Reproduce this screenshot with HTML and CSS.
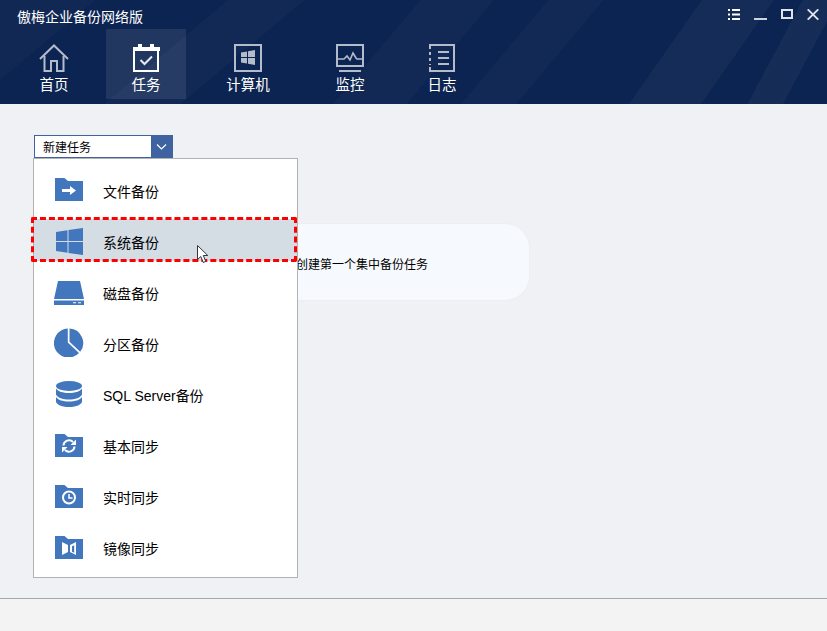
FILE: index.html
```html
<!DOCTYPE html>
<html lang="zh-CN">
<head>
<meta charset="utf-8">
<title>傲梅企业备份网络版</title>
<link rel="stylesheet" href="styles.css">
</head>
<body>
<div class="app">
  <header class="header">
    <div class="titlebar">
      <span class="app-title">傲梅企业备份网络版</span>
      <div class="win-controls">
        <svg class="win-icon" width="12" height="11" viewBox="0 0 12 11"><path fill="#fff" d="M0 0h2v2H0zM4 0h8v2H4zM0 4.500h2v2H0zM4 4.500h8v2H4zM0 9h2v2H0zM4 9h8v2H4z"/></svg>
        <svg class="win-icon" width="13" height="11" viewBox="0 0 13 11"><path fill="#ccd2de" d="M0 9h13v2H0z"/></svg>
        <svg class="win-icon" width="12" height="11" viewBox="0 0 12 11"><path fill="none" stroke="#dfe3ea" stroke-width="2" d="M1 1h10v8H1z"/></svg>
        <svg class="win-icon" width="12" height="11" viewBox="0 0 12 11"><path fill="none" stroke="#dfe3ea" stroke-width="1.800" d="M.7.300l10.600 10.400M11.300.300L.7 10.700"/></svg>
      </div>
    </div>
    <nav class="nav">
      <a class="nav-item">
        <svg width="30" height="28" viewBox="0 0 30 28" fill="none" stroke="#b4bccb" stroke-width="2"><path d="M1 15L15 1.500 29 15"/><path d="M5.500 12v15h6.500V17h6v10h6.500V12"/></svg>
        <span>首页</span>
      </a>
      <a class="nav-item nav-item-active">
        <svg width="28" height="28" viewBox="0 0 28 28"><path fill="none" stroke="#fff" stroke-width="2" d="M2 4h24v23H2z"/><path fill="#fff" d="M1 3h27v4H1zM6 0h4v3H6zM18 0h4v3h-4z"/><path fill="none" stroke="#e8ebf1" stroke-width="2" d="M8.500 16l4 4 7.500-7.500"/></svg>
        <span>任务</span>
      </a>
      <a class="nav-item nav-item-wide">
        <svg width="28" height="28" viewBox="0 0 28 28"><path fill="none" stroke="#b4bccb" stroke-width="2" d="M1 1h26v26H1z"/><path fill="#b4bccb" d="M7 8.500l6-1V13H7zM14 7.300l7-1.300V13h-7zM7 14h6v5.500l-6-1zM14 14h7v7l-7-1.300z"/></svg>
        <span>计算机</span>
      </a>
      <a class="nav-item">
        <svg width="28" height="28" viewBox="0 0 28 28" fill="none" stroke="#b4bccb" stroke-width="2"><path d="M1 1h26v21H1z"/><path d="M1 15h7l3-3 3 4 3-7 3 5 1 1h6" stroke-width="1.600"/><path d="M3 27h22"/></svg>
        <span>监控</span>
      </a>
      <a class="nav-item">
        <svg width="26" height="28" viewBox="0 0 26 28" fill="none" stroke="#b4bccb" stroke-width="2"><path d="M1 5V1h24v26H1v-4M1 8v3M1 14v3M1 20v1"/><path d="M9 8h11M9 14h11M9 20h11" stroke-width="1.800"/></svg>
        <span>日志</span>
      </a>
    </nav>
  </header>

  <main class="main">
    <div class="select-wrap">
      <div class="select">
        <span class="select-value">新建任务</span>
        <span class="select-btn">
          <svg width="11" height="6" viewBox="0 0 11 6" fill="none" stroke="#fff" stroke-width="1.200"><path d="M1 .5l4.500 4.500L10 .5"/></svg>
        </span>
      </div>
      <ul class="menu">
        <li class="menu-row">
          <svg class="menu-icon" width="30" height="30" viewBox="0 0 30 30"><path fill="#4277bd" d="M1 4h9.500l3.500 3h15v20H1z"/><path fill="#fff" d="M8 15h8v-3l6 4.500-6 4.500v-3H8z"/></svg>
          <span>文件备份</span>
        </li>
        <li class="menu-row menu-row-active">
          <svg class="menu-icon" width="30" height="30" viewBox="0 0 30 30"><path fill="#4277bd" d="M2 7l11.500-1.700V16H2zM14.500 5.100L29 3V16H14.500zM2 17h11.500v10.700L2 26zM14.500 17H29v13l-14.500-2.100z"/></svg>
          <span>系统备份</span>
          <div class="focus-ring"></div>
          <svg class="cursor" width="13" height="18" viewBox="0 0 13 18"><path fill="#fff" stroke="#33373d" d="M.5.500v14l3.300-3 2.500 6 2.500-1-2.500-6h4.500z"/></svg>
        </li>
        <li class="menu-row">
          <svg class="menu-icon" width="30" height="30" viewBox="0 0 30 30"><path fill="#4277bd" d="M4 5h22l4 18H0zM0 24.500h30V29H0z"/><path fill="#fff" d="M19 26.300h3v1h-3zM24 26.300h3v1h-3z"/></svg>
          <span>磁盘备份</span>
        </li>
        <li class="menu-row">
          <svg class="menu-icon" width="30" height="30" viewBox="0 0 30 30"><path fill="#4277bd" d="M13.800 1.600A14.500 14.500 0 1 0 25 26L13.800 15.500zM15.500 1.500A14.500 14.500 0 0 1 26.200 24.800L15.500 14.800z"/></svg>
          <span>分区备份</span>
        </li>
        <li class="menu-row">
          <svg class="menu-icon" width="30" height="30" viewBox="0 0 30 30"><g fill="#4277bd"><ellipse cx="15" cy="8" rx="13" ry="5"/><path d="M2 10.500c2 3 7 4.500 13 4.500s11-1.500 13-4.500v6c-1 3-7 5-13 5s-12-2-13-5zM2 19c2 3 7 4.500 13 4.500S26 22 28 19v5c-1 3-7 5-13 5S3 27 2 24z"/></g></svg>
          <span class="latin">SQL Server<span class="cjk">备份</span></span>
        </li>
        <li class="menu-row">
          <svg class="menu-icon" width="30" height="30" viewBox="0 0 30 30"><path fill="#4277bd" d="M1 5h9.500l3.500 3h15v20H1z"/><g fill="none" stroke="#fff" stroke-width="2"><path d="M9.500 16.500a5.500 5.500 0 0 1 9.500-3.500M20.500 17.500a5.500 5.500 0 0 1-9.500 3.500"/></g><path fill="#fff" d="M22 10.500v5.500h-5.500zM8 23.500V18h5.500z"/></svg>
          <span>基本同步</span>
        </li>
        <li class="menu-row">
          <svg class="menu-icon" width="30" height="30" viewBox="0 0 30 30"><path fill="#4277bd" d="M1 5h9.500l3.500 3h15v20H1z"/><circle cx="15" cy="17.500" r="6" fill="none" stroke="#fff" stroke-width="2"/><path fill="none" stroke="#fff" stroke-width="1.500" d="M15 14v4h3.500"/></svg>
          <span>实时同步</span>
        </li>
        <li class="menu-row">
          <svg class="menu-icon" width="30" height="30" viewBox="0 0 30 30"><path fill="#4277bd" d="M1 5h9.500l3.500 3h15v20H1z"/><path fill="#fff" d="M8 11l6 3v7l-6 3zM22 11v13l-6-3v-7z"/><path fill="#4277bd" d="M18 15.200l2.200-1v7.600l-2.200-1z"/></svg>
          <span>镜像同步</span>
        </li>
      </ul>
    </div>
    <section class="notice">
      <p class="notice-text">创建第一个集中备份任务</p>
    </section>
  </main>

  <footer class="footer"></footer>
</div>
</body>
</html>
```
FILE: styles.css
```css
* { box-sizing: border-box; margin: 0; padding: 0; }
html, body { width: 100%; height: 100%; overflow: hidden; }
body {
  font-family: "Noto Sans CJK SC", "Liberation Sans", sans-serif;
  color: #000;
  background: #f0f1f5;
}
.app { height: 631px; display: flex; flex-direction: column; }

.header {
  height: 104px;
  flex: none;
  color: #fff;
  background-color: #0c2451;
  background-image:
    linear-gradient(118deg, transparent 0 91%, rgba(255,255,255,.04) 91% 95%, transparent 95%),
    linear-gradient(125deg, transparent 0 78%, rgba(255,255,255,.035) 78% 86%, transparent 86%),
    linear-gradient(130deg, transparent 0 46%, rgba(255,255,255,.025) 46% 54%, transparent 54% 60%, rgba(255,255,255,.025) 60% 66%, transparent 66%),
    linear-gradient(140deg, rgba(255,255,255,.02) 0 10%, transparent 10% 24%, rgba(255,255,255,.025) 24% 32%, transparent 32%);
}
.titlebar {
  height: 29px;
  display: flex;
  justify-content: space-between;
  padding: 9px 8px 0 17px;
}
.app-title { font-size: 14px; line-height: 14px; color: #fff; }
.win-controls { display: flex; gap: 14px; height: 11px; }
.win-icon { display: block; }

.nav { display: flex; gap: 12px; padding-left: 14px; height: 70px; }
.nav-item {
  width: 80px;
  display: flex;
  flex-direction: column;
  align-items: center;
  padding-top: 15px;
  color: #fff;
  font-size: 14.500px;
  line-height: 20px;
}
.nav-item svg { display: block; flex: none; margin-bottom: 2px; }
.nav-item-wide { width: 100px; }
.nav-item-active { background: rgba(255,255,255,.09); }

.main { flex: 1; padding: 31px 0 0 34px; position: relative; }
.select-wrap { position: relative; width: 139px; }
.select {
  height: 23px;
  display: flex;
  border: 1px solid #3f62a0;
  background: #fff;
}
.select-value { flex: 1; font-size: 12px; line-height: 21px; padding-left: 8px; }
.select-btn {
  width: 21px;
  background: #3f62a0;
  display: flex;
  align-items: center;
  justify-content: center;
}

.menu {
  position: absolute;
  left: -1px;
  top: 23px;
  width: 265px;
  height: 420px;
  list-style: none;
  background: #fff;
  border: 1px solid #b2b2b2;
  padding-top: 9px;
  display: flex;
  flex-direction: column;
  gap: 9px;
  z-index: 2;
}
.menu-row {
  height: 42px;
  flex: none;
  position: relative;
  display: flex;
  align-items: center;
  padding: 2px 0 0 20px;
  font-size: 14px;
}
.menu-icon { display: block; flex: none; margin-right: 19px; margin-top: -2px; }
.menu-row-active { background: #d4dce4; }
.menu-row span { position: relative; top: 1px; }
.menu-row .cjk { top: 0; }
.latin { font-family: "Liberation Sans", sans-serif; }
.cjk { font-family: "Noto Sans CJK SC", sans-serif; }
.focus-ring {
  position: absolute;
  left: -3px;
  right: 0;
  top: -2px;
  bottom: -1px;
  border: 3px dashed #f00;
  border-radius: 2px;
}
.cursor { position: absolute; left: 163px; top: 26px; }

.notice {
  margin: 65px 0 0 100px;
  width: 396px;
  height: 78px;
  background: #f6f9fd;
  border: 1px solid #eceef3;
  border-radius: 25px;
  padding-left: 161px;
  display: flex;
  align-items: center;
}
.notice-text { font-size: 12px; line-height: 16px; padding-top: 4px; }

.footer {
  height: 33px;
  flex: none;
  background: #f3f3f3;
  border-top: 1px solid #a8a8a8;
}
```
